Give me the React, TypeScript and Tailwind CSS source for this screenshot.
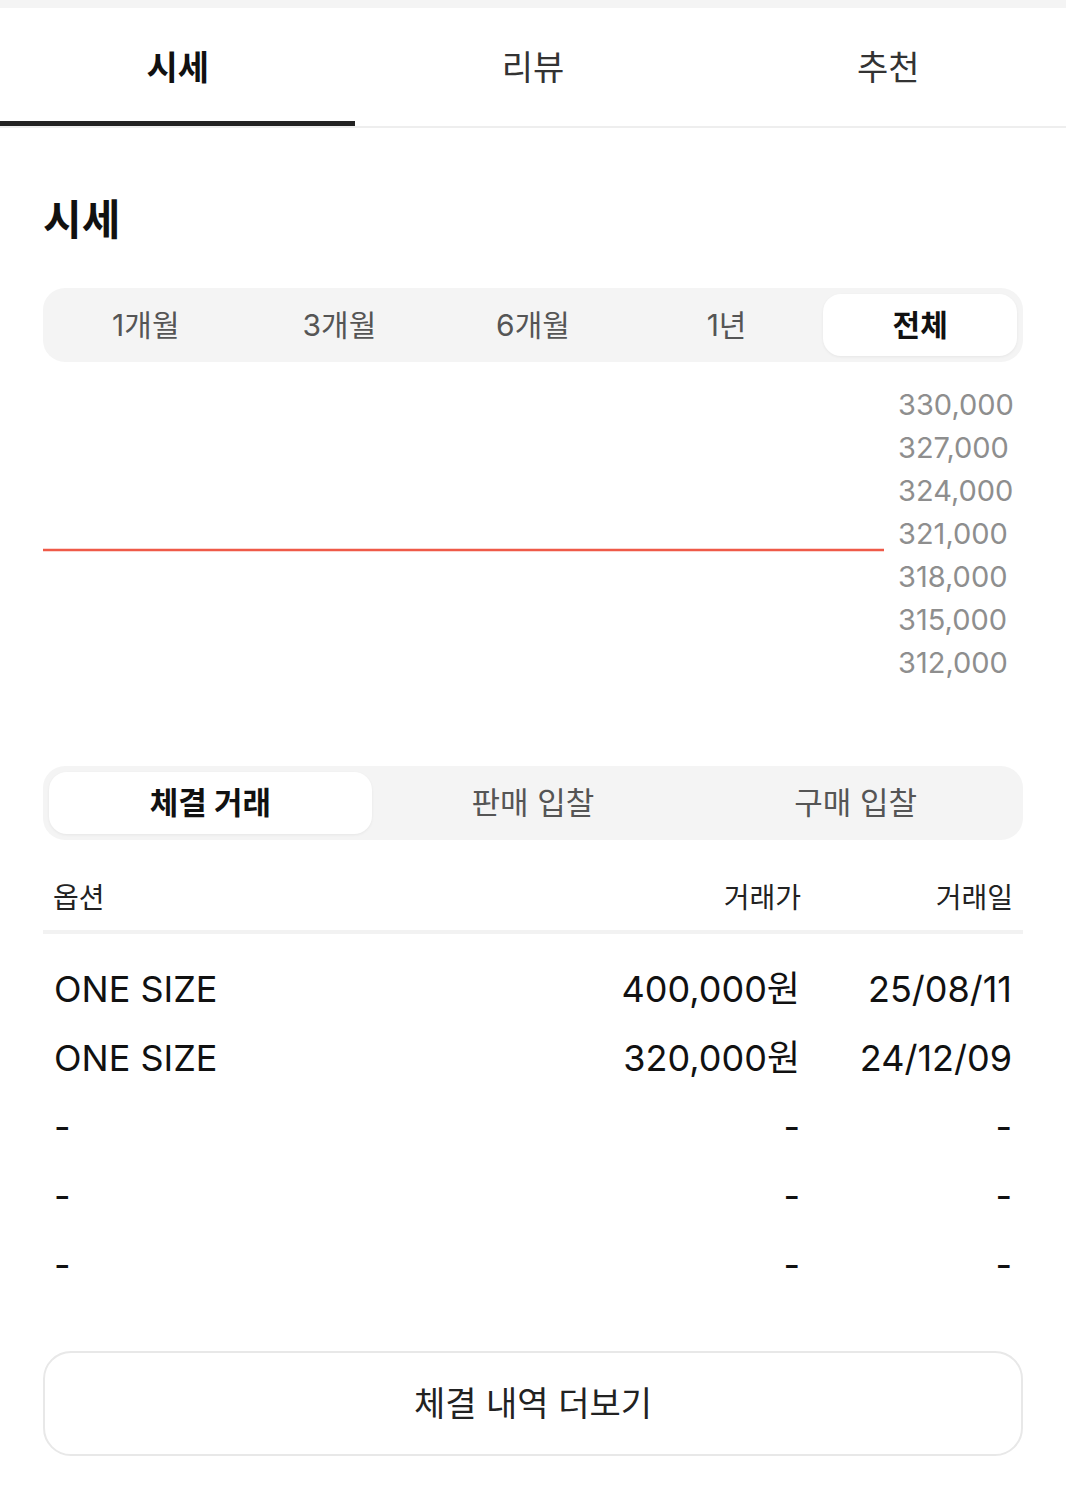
const font = { fontFamily: 'Inter, "Noto Sans CJK KR", sans-serif' };

const ticks = ["330,000", "327,000", "324,000", "321,000", "318,000", "315,000", "312,000"];
const periods = ["1개월", "3개월", "6개월", "1년", "전체"];
const trades = [
  { option: "ONE SIZE", price: "400,000원", date: "25/08/11" },
  { option: "ONE SIZE", price: "320,000원", date: "24/12/09" },
  { option: "-", price: "-", date: "-" },
  { option: "-", price: "-", date: "-" },
  { option: "-", price: "-", date: "-" },
];

export default function App() {
  return (
    <div className="w-[1066px] bg-white text-[#222]" style={font}>
      {/* top strip */}
      <div className="h-2 bg-[#f4f4f4]" />

      {/* Tabs */}
      <div className="flex border-b-2 border-[#eeeeee]">
        {["시세", "리뷰", "추천"].map((t, i) => (
          <div
            key={t}
            className={
              "flex-1 h-[118px] pt-[6px] flex items-center justify-center text-[34px] border-b-[5px] " +
              (i === 0 ? "border-[#222] font-bold text-[#111]" : "border-transparent text-[#333]")
            }
          >
            {t}
          </div>
        ))}
      </div>

      <div className="px-[43px]">
        {/* Heading */}
        <h2 className="pt-[64px] h-[160px] text-[42px] font-bold leading-[56px] text-[#111]">시세</h2>

        {/* Period selector */}
        <div className="flex h-[74px] items-center rounded-[22px] bg-[#f4f4f4] p-[6px]">
          {periods.map((p) => (
            <div
              key={p}
              className={
                "flex-1 h-full flex items-center justify-center rounded-[18px] text-[30px] " +
                (p === "전체" ? "bg-white font-bold text-[#111] shadow-[0_1px_3px_rgba(0,0,0,0.06)]" : "text-[#555]")
              }
            >
              {p}
            </div>
          ))}
        </div>

        {/* Chart */}
        <div className="flex mt-[21px] h-[383px]">
          <div className="flex-1 h-[301px]">
            <svg width="100%" height="301" viewBox="0 0 841 301" preserveAspectRatio="none">
              <line x1="0" y1="167" x2="841" y2="167" stroke="#ef5a48" strokeWidth="2.5" />
            </svg>
          </div>
          <div className="w-[139px] pl-[14px] flex flex-col">
            {ticks.map((t) => (
              <div key={t} className="h-[43px] leading-[43px] text-[29px] text-[#8e8e8e]">
                {t}
              </div>
            ))}
          </div>
        </div>

        {/* Trade type selector */}
        <div className="flex h-[74px] items-center rounded-[22px] bg-[#f4f4f4] p-[6px]">
          {["체결 거래", "판매 입찰", "구매 입찰"].map((p, i) => (
            <div
              key={p}
              className={
                "flex-1 h-full flex items-center justify-center rounded-[18px] text-[31px] " +
                (i === 0 ? "bg-white font-bold text-[#111] shadow-[0_1px_3px_rgba(0,0,0,0.06)]" : "text-[#555]")
              }
            >
              {p}
            </div>
          ))}
        </div>

        {/* Table header */}
        <div className="mt-[26px] flex items-center h-[68px] px-[10px] border-b-4 border-[#f2f2f2] text-[28px] text-[#222]">
          <div className="flex-1">옵션</div>
          <div className="w-[250px] text-right">거래가</div>
          <div className="w-[212px] text-right">거래일</div>
        </div>

        {/* Rows */}
        <div className="pt-[20px]">
          {trades.map((r, i) => (
            <div key={i} className="flex items-center h-[69px] px-[11px] text-[36px] text-[#111]">
              <div className="flex-1">{r.option}</div>
              <div className="w-[250px] text-right">{r.price}</div>
              <div className="w-[212px] text-right">{r.date}</div>
            </div>
          ))}
        </div>

        {/* More button */}
        <button className="mt-[52px] mb-[40px] w-full h-[105px] rounded-[28px] border-2 border-[#e8e8e8] bg-white text-[34px] text-[#222] flex items-center justify-center">
          체결 내역 더보기
        </button>
      </div>
    </div>
  );
}
